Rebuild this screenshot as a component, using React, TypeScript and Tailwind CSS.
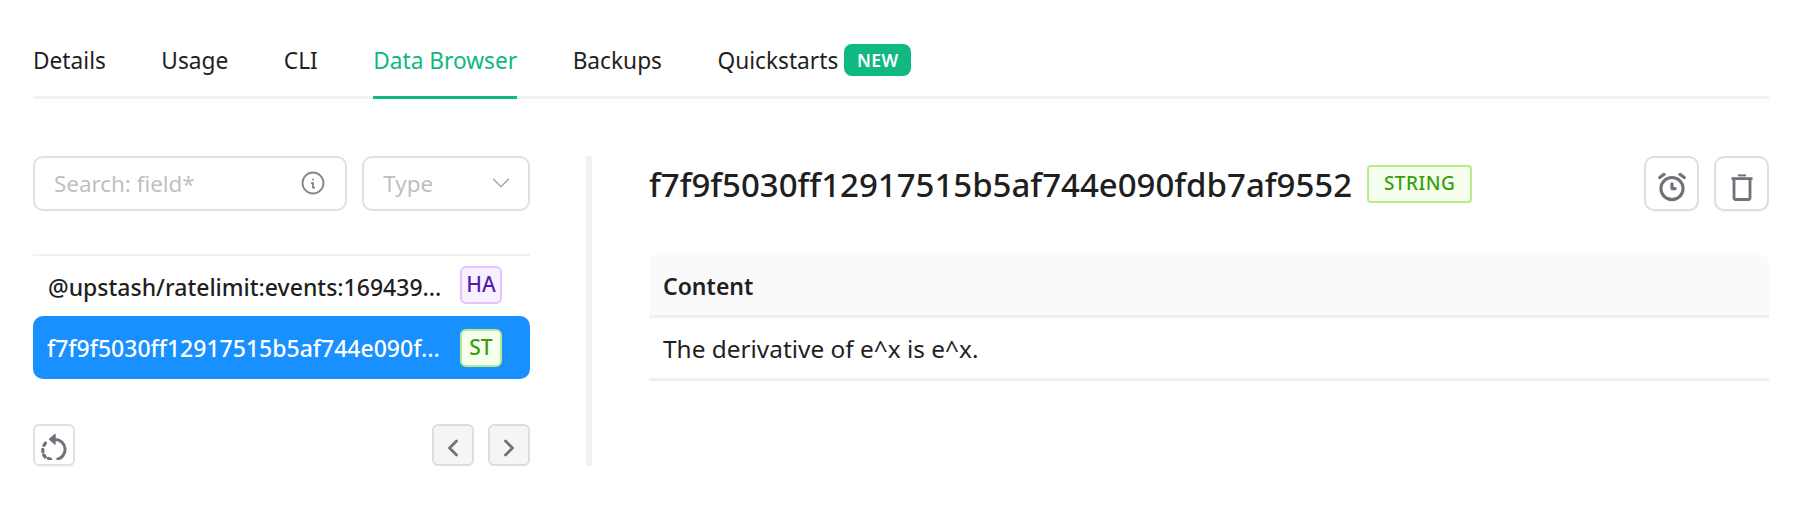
import { TbAlarm, TbChevronDown, TbChevronLeft, TbChevronRight, TbInfoCircle } from "react-icons/tb";

const tabs = ["Details", "Usage", "CLI", "Data Browser", "Backups", "Quickstarts"];

function ReloadIcon() {
  return (
    <svg width="30" height="30" viewBox="0 0 30 30" fill="none" stroke="#71717a" strokeWidth="3" strokeLinejoin="round">
      <path d="M13 9.5h3a10 10 0 0 1 1.5 19.9" />
      <path d="M16 4.5v9.5l-5.5-4.7z" fill="#71717a" strokeWidth="1.4" />
      <path d="M6.4 13.2l-1.4 2.2M3.8 19.4v2.4M4.8 25l1.4 2M9.4 28.4l2.2.9" strokeLinecap="round" strokeWidth="3.2" />
    </svg>
  );
}

function TrashIcon() {
  return (
    <svg width="28" height="28" viewBox="0 0 28 28" fill="none" stroke="#71717a" strokeWidth="2.8">
      <path d="M3.5 5.6h21" />
      <path d="M10 2.4h8" strokeWidth="2" />
      <path d="M6 7v18a1.5 1.5 0 0 0 1.5 1.5h13A1.5 1.5 0 0 0 22 25V7" />
    </svg>
  );
}

export default function App() {
  return (
    <div className="min-h-[505px] bg-white pl-[33px] pr-[38px] font-['Noto_Sans',sans-serif] text-[#1f1f1f]">
      <div className="flex h-[99px] gap-[55.5px] border-b-[3px] border-[#f2f2f2] pt-[44px]">
        {tabs.map((t) => (
          <div key={t} className={t === "Data Browser" ? "-mb-[3px] h-[55px] border-b-[3px] border-[#10b981] text-[22.7px] leading-[34px] text-[#10b981]" : "flex h-[52px] gap-[6px] text-[22.7px] leading-[34px]"}>
            <span>{t}</span>
            {t === "Quickstarts" && (
              <span className="flex h-[32px] w-[67px] items-center justify-center rounded-[8px] bg-[#10b981] text-[17.5px] font-semibold tracking-wide text-white">NEW</span>
            )}
          </div>
        ))}
      </div>

      <div className="mt-[57px] flex">
        <div className="w-[497px]">
          <div className="flex gap-[15px]">
            <div className="flex h-[55px] w-[315px] items-center justify-between rounded-[10px] border-2 border-[#e0e0e0] pl-[19px] pr-[18px]">
              <span className="text-[22.4px] text-[#bfbfbf]">Search: field*</span>
              <TbInfoCircle className="mb-[2px] text-[#85858f]" size={28} strokeWidth={1.6} />
            </div>
            <div className="flex h-[55px] w-[168px] items-center justify-between rounded-[10px] border-2 border-[#e0e0e0] pl-[19px] pr-[12px]">
              <span className="text-[22.4px] text-[#bfbfbf]">Type</span>
              <TbChevronDown className="mb-[2px] text-[#a3a3a3]" size={30} strokeWidth={1.1} />
            </div>
          </div>

          <div className="mt-[43px] border-t-2 border-[#f2f2f2] pb-[3px]">
            <div className="flex h-[60px] items-center justify-between overflow-hidden pl-[15px] pr-[28px]">
              <span className="whitespace-nowrap pt-[2px] text-[23px] font-medium">@upstash/ratelimit:events:169439...</span>
              <span className="mb-[2px] flex h-[38px] w-[42px] shrink-0 items-center justify-center rounded-[6px] border-2 border-[#e0c4fb] bg-[#f9f0ff] text-[21px] font-medium text-[#531dab]">HA</span>
            </div>
            <div className="flex h-[63px] items-center justify-between overflow-hidden rounded-[10px] bg-[#1890ff] pl-[14px] pr-[28px] text-white">
              <span className="whitespace-nowrap pt-[2px] text-[23px] font-medium">f7f9f5030ff12917515b5af744e090f...</span>
              <span className="flex h-[38px] w-[42px] shrink-0 items-center justify-center rounded-[6px] border-2 border-[#b7eb8f] bg-[#f6ffed] text-[21px] font-medium text-[#389e0d]">ST</span>
            </div>
          </div>

          <div className="mt-[42px] flex justify-between">
            <button className="flex h-[42px] w-[42px] items-center justify-center rounded-[6px] border-2 border-[#e0e0e0] bg-white shadow-[0_2px_0_rgba(0,0,0,0.02)]">
              <ReloadIcon />
            </button>
            <div className="flex gap-[14px]">
              <button className="flex h-[42px] w-[42px] items-center justify-center rounded-[6px] border-2 border-[#dedede] bg-[#f5f5f5] pt-[6px]">
                <TbChevronLeft className="text-[#71717a]" size={28} strokeWidth={2.4} />
              </button>
              <button className="flex h-[42px] w-[42px] items-center justify-center rounded-[6px] border-2 border-[#dedede] bg-[#f5f5f5] pt-[6px]">
                <TbChevronRight className="text-[#71717a]" size={28} strokeWidth={2.4} />
              </button>
            </div>
          </div>
        </div>

        <div className="ml-[56px] w-[6px] bg-[#f2f2f2]" />

        <div className="ml-[57px] flex-1">
          <div className="flex h-[55px] items-center">
            <span className="whitespace-nowrap pt-[2px] text-[33px] font-medium">f7f9f5030ff12917515b5af744e090fdb7af9552</span>
            <span className="ml-[15px] flex h-[38px] w-[105px] items-center justify-center rounded-[4px] border-2 border-[#b7eb8f] bg-[#f6ffed] text-[19px] font-medium tracking-wide text-[#389e0d]">STRING</span>
            <div className="ml-auto flex gap-[15px]">
              <button className="flex h-[55px] w-[55px] items-center justify-center rounded-[10px] border-2 border-[#dedede] bg-white pt-[6px] shadow-[0_2px_0_rgba(0,0,0,0.02)]">
                <TbAlarm className="text-[#71717a]" size={38} />
              </button>
              <button className="flex h-[55px] w-[55px] items-center justify-center rounded-[10px] border-2 border-[#dedede] bg-white pt-[6px] shadow-[0_2px_0_rgba(0,0,0,0.02)]">
                <TrashIcon />
              </button>
            </div>
          </div>

          <div className="mt-[42px]">
            <div className="flex h-[65px] items-center rounded-t-[12px] border-b-[3px] border-[#f0f0f0] bg-[#fafafa] px-[14px] pt-[4px] text-[23px] font-semibold">Content</div>
            <div className="flex h-[63px] items-center border-b-[3px] border-[#f0f0f0] px-[14px] pt-[2px] text-[24.4px]">The derivative of e^x is e^x.</div>
          </div>
        </div>
      </div>
    </div>
  );
}
